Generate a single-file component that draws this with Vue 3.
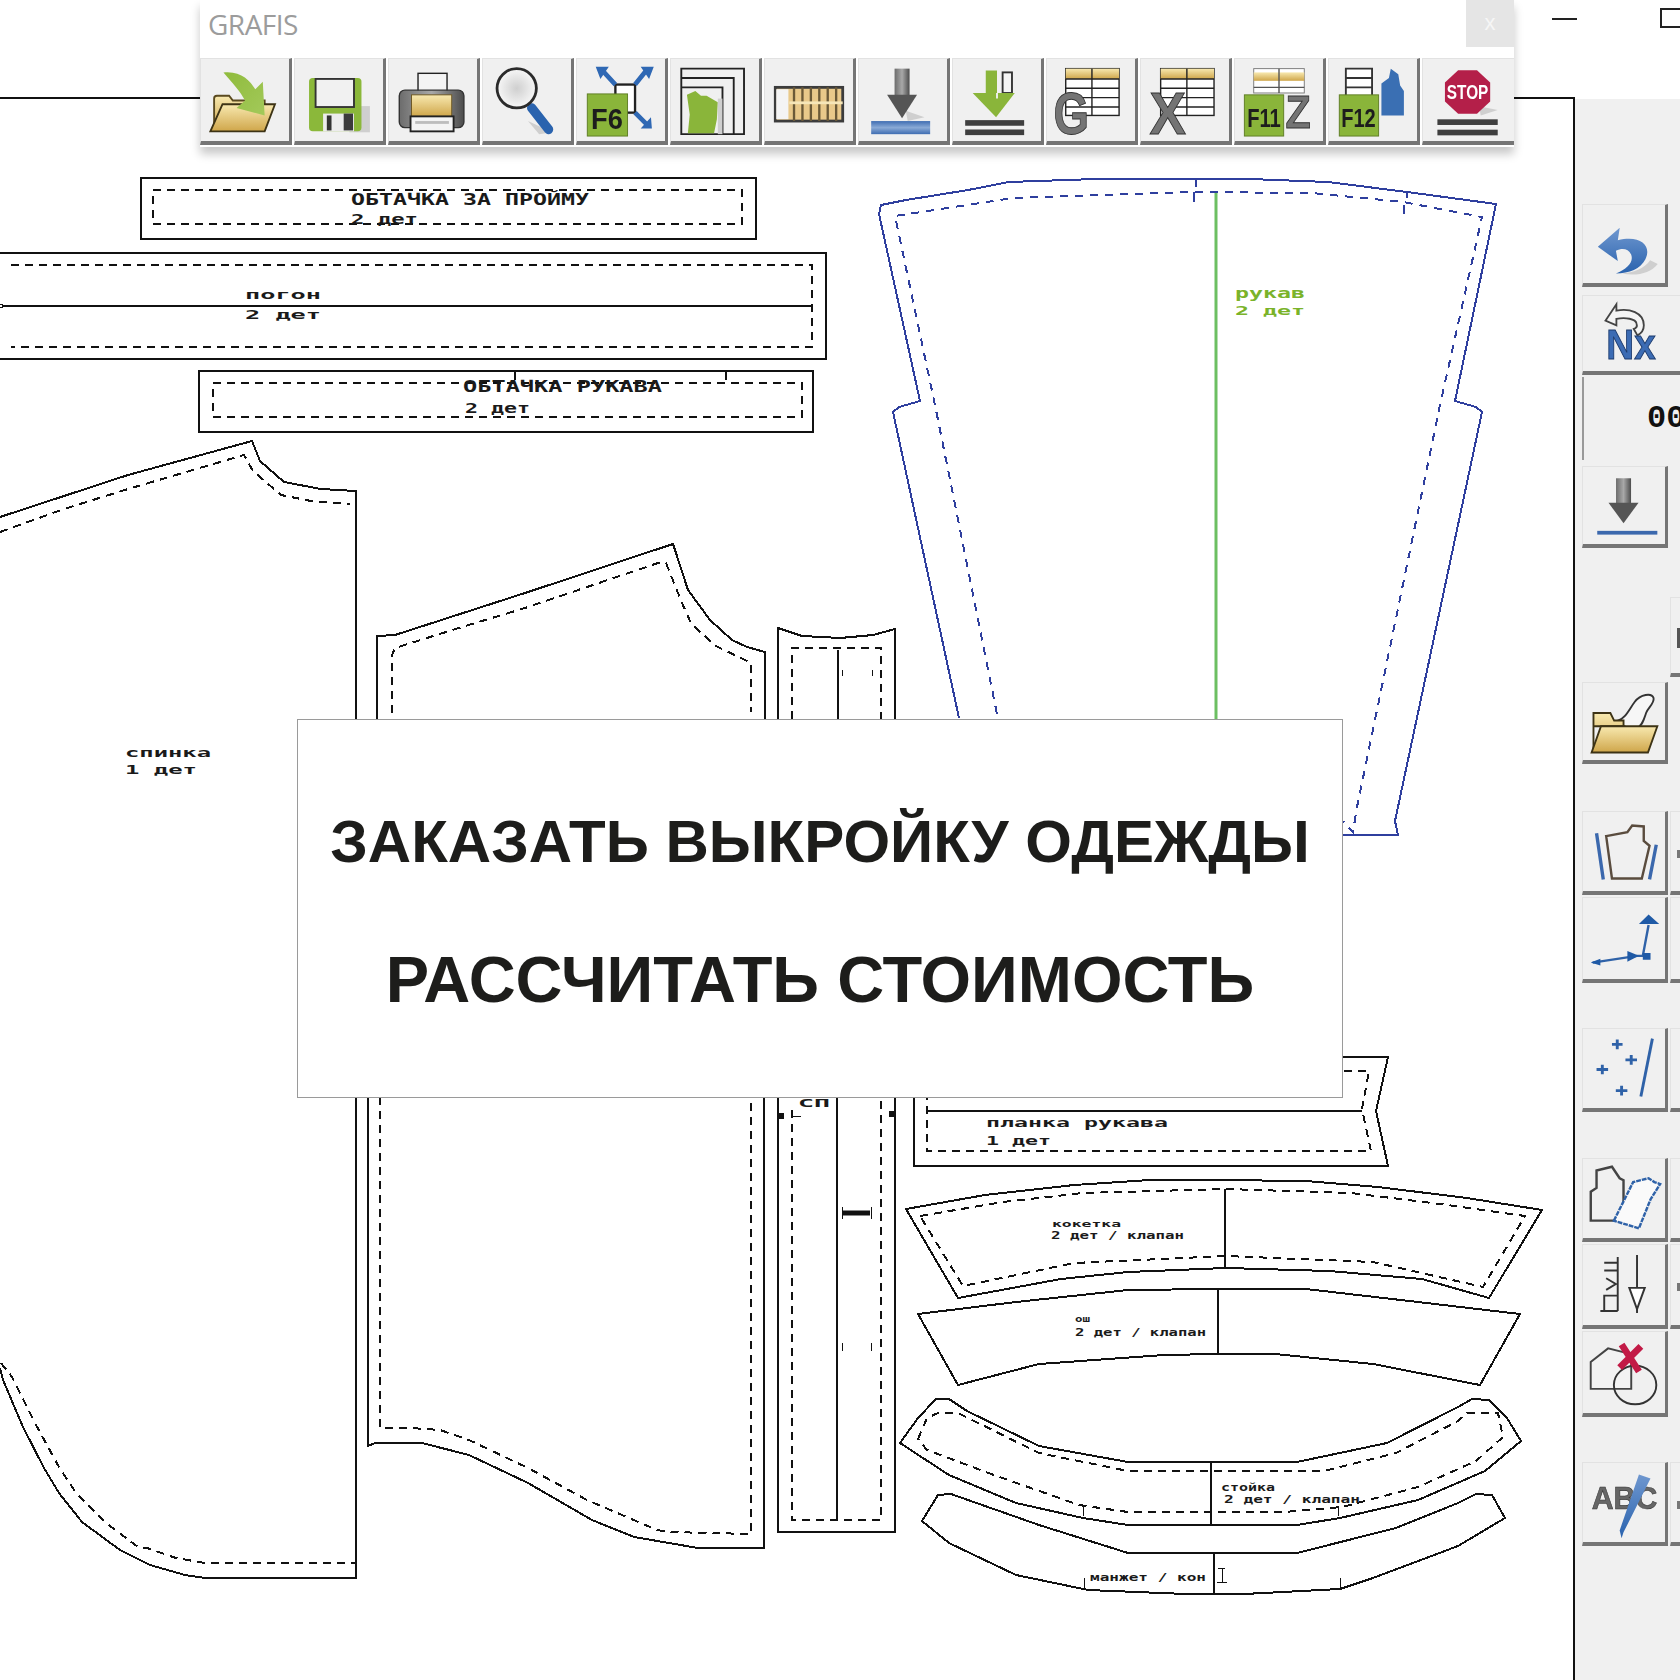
<template>
  <div class="screen">
    <svg class="defs" width="0" height="0">
      <defs>
        <linearGradient id="gFolder" x1="0" y1="0" x2="0" y2="1">
          <stop offset="0" stop-color="#f8e9b0" />
          <stop offset="1" stop-color="#cfa64a" />
        </linearGradient>
        <linearGradient id="gGreen" x1="0" y1="0" x2="1" y2="1">
          <stop offset="0" stop-color="#8fbb3c" />
          <stop offset="1" stop-color="#a3c95a" />
        </linearGradient>
        <linearGradient id="gSteel" x1="0" y1="0" x2="1" y2="0">
          <stop offset="0" stop-color="#6c6c6c" />
          <stop offset="0.5" stop-color="#a8a8a8" />
          <stop offset="1" stop-color="#4c4c4c" />
        </linearGradient>
        <linearGradient id="gBlue" x1="0" y1="0" x2="0" y2="1">
          <stop offset="0" stop-color="#6f97cf" />
          <stop offset="1" stop-color="#2a63ae" />
        </linearGradient>
        <linearGradient id="gBar" x1="0" y1="0" x2="0" y2="1">
          <stop offset="0" stop-color="#3f6db2" />
          <stop offset="0.5" stop-color="#8aaad6" />
          <stop offset="1" stop-color="#3f6db2" />
        </linearGradient>
        <radialGradient id="gLens">
          <stop offset="0" stop-color="#cfcfcf" />
          <stop offset="1" stop-color="#f7f7f7" />
        </radialGradient>
      </defs>
    </svg>

    <div class="caption">
      <span class="minimize"></span>
      <span class="restore"></span>
    </div>

    <div class="body">
      <div class="workspace">
        <svg class="sheet" viewBox="0 99 1573 1581" width="1573" height="1581">
          <!-- обтачки и погон -->
          <rect class="cut" x="141" y="178" width="615" height="61" />
          <rect class="seam" x="153" y="190" width="589" height="34" />
          <polyline class="cut" points="0,253 826,253 826,359 0,359" />
          <polyline class="seam" points="11,265 812,265 812,347 11,347" />
          <line class="cut" x1="2" y1="306" x2="812" y2="306" />
          <circle class="thin" cx="1" cy="306" r="2" />
          <rect class="cut" x="199" y="371" width="614" height="61" />
          <rect class="seam" x="213" y="383" width="589" height="34" />
          <path class="cut" d="M515 371v9M726 371v9" />

          <!-- спинка -->
          <polyline class="cut" points="0,517 128,475 252,441 260,461 284,482 321,489 356,491 356,1578 205,1578 185,1575 150,1565 120,1550 82,1522 59,1493 44,1468 23,1427 3,1380 0,1368" />
          <polyline class="seam" points="0,532 64,509 128,489 244,455 253,471 281,495 311,501 350,504" />
          <polyline class="seam" points="1,1363 12,1377 35,1423 59,1467 76,1493 106,1523 138,1547 147,1548 176,1558 205,1563 355,1563" />

          <!-- перед -->
          <polyline class="cut" points="377,719 377,636 395,635 525,593 673,544 675,550 688,590 710,620 732,640 747,647 765,652 765,719" />
          <polyline class="seam" points="392,713 392,655 395,648 462,627 525,608 658,563 666,563 682,603 691,623 714,645 751,663 751,712" />
          <polyline class="cut" points="368,1097 368,1446 375,1443 422,1443 469,1455 528,1483 592,1520 634,1537 698,1548 764,1548 764,1097" />
          <polyline class="seam" points="380,1097 380,1428 411,1428 440,1430 469,1440 528,1468 587,1500 657,1530 669,1532 751,1534 751,1097" />

          <!-- планка -->
          <polyline class="cut" points="778,719 778,628 802,636 840,638 873,635 895,629 895,719" />
          <polyline class="seam" points="792,719 792,648 881,648 881,719" />
          <line class="cut" x1="838" y1="650" x2="838" y2="719" />
          <path class="thin" d="M842 670v6M872 670v6M842 1207v12M871 1207v12M842 1343v8M871 1343v8" />
          <line class="heavy" x1="843" y1="1213" x2="870" y2="1213" />
          <polyline class="cut" points="778,1097 778,1532 895,1532 895,1097" />
          <polyline class="seam" points="792,1110 792,1520 881,1520 881,1097" />
          <line class="cut" x1="837" y1="1097" x2="837" y2="1520" />
          <path class="thin" d="M792 1116h9" />
          <rect class="mark" x="778" y="1113" width="6" height="6" />
          <rect class="mark" x="889" y="1111" width="6" height="6" />

          <!-- рукав -->
          <polyline class="sleeve" points="959,718 893,412 899,407 920,401 879,214 881,205 906,200 968,190 1009,182 1096,179 1194,179 1250,179 1328,182 1407,192 1496,204 1455,401 1476,407 1482,412 1395,821 1398,835 1343,835" />
          <polyline class="sleeve-seam" points="997,714 935,405 895,216 1013,198 1192,192 1312,193 1403,202 1482,217 1440,405 1357,807 1353,832 1343,821" />
          <path class="sleeve" d="M1196 179v8M1194 192v10M1407 192v6M1404 205v9" />
          <line class="grain" x1="1216" y1="193" x2="1216" y2="719" />

          <!-- планка рукава -->
          <polyline class="cut" points="1342,1057 1388,1057 1376,1111 1388,1166 914,1166 914,1097" />
          <polyline class="seam" points="1344,1071 1369,1071 1362,1109 1371,1151 927,1151 927,1097" />
          <line class="cut" x1="927" y1="1111" x2="1362" y2="1111" />

          <!-- кокетка -->
          <polygon class="cut" points="906,1209 985,1195 1074,1185 1150,1180 1217,1180 1306,1181 1378,1187 1467,1198 1542,1210 1489,1298 1422,1279 1329,1271 1226,1268 1128,1272 1061,1279 958,1298" />
          <polygon class="seam" points="920,1216 1003,1202 1083,1193 1226,1189 1351,1193 1440,1204 1525,1216 1483,1287 1373,1262 1226,1256 1074,1263 963,1286" />
          <line class="cut" x1="1225" y1="1189" x2="1225" y2="1268" />
          <polygon class="cut" points="918,1314 1016,1302 1128,1290 1217,1289 1306,1289 1418,1302 1520,1314 1480,1385 1373,1364 1275,1354 1217,1354 1164,1355 1039,1364 958,1385" />
          <line class="cut" x1="1218" y1="1289" x2="1218" y2="1354" />

          <!-- стойка -->
          <polygon class="cut" points="900,1443 918,1418 936,1399 949,1399 967,1411 1039,1446 1128,1462 1210,1462 1297,1462 1387,1443 1458,1407 1472,1399 1489,1400 1507,1418 1521,1441 1485,1471 1418,1500 1340,1518 1297,1525 1128,1525 1083,1518 1016,1503 949,1475" />
          <polygon class="seam" points="918,1439 927,1418 938,1413 958,1413 1039,1453 1128,1471 1324,1471 1396,1453 1458,1421 1467,1413 1498,1413 1503,1437 1476,1461 1418,1487 1342,1507 1284,1512 1128,1512 1079,1505 994,1475 927,1450" />
          <line class="cut" x1="1211" y1="1462" x2="1211" y2="1525" />
          <polygon class="cut" points="922,1521 938,1495 951,1494 1039,1525 1128,1553 1297,1553 1396,1528 1458,1503 1476,1494 1492,1495 1505,1518 1458,1546 1373,1578 1340,1589 1244,1594 1186,1594 1088,1590 1016,1575 949,1543" />
          <line class="cut" x1="1214" y1="1553" x2="1214" y2="1594" />
          <path class="thin" d="M1084 1578v12M1340 1578v11M1083 1506v10M1338 1506v10M1218 1568h7M1222 1568v14M1217 1582h10" />

          <text
            v-for="label in labels"
            :key="label.text + label.y"
            class="label"
            :class="label.tone"
            :x="label.x"
            :y="label.y"
            :font-size="label.size"
            :textLength="label.width"
            lengthAdjust="spacingAndGlyphs"
          >{{ label.text }}</text>
        </svg>
      </div>

      <aside class="panel">
        <div class="row r-undo">
          <button class="tool side">
            <svg viewBox="0 0 85 82"><path class="soft" d="M40 72c12-1 24-5 30-14l8 4c-8 10-22 13-38 10z" /><path fill="url(#gBlue)" d="M15 44 38 24l-2 13c24-6 36 6 29 20-5 10-17 15-31 15 12-5 19-12 16-20-3-6-9-7-16-4l2 11z" /></svg>
          </button>
        </div>
        <div class="row r-nx">
          <button class="tool side flat">
            <svg viewBox="0 0 85 82"><path fill="#f4f4f4" stroke="#444" stroke-width="2" d="M20 27 32 9v7c14-3 30 2 30 16 0 5-3 9-7 11l-4-7c3-1 4-3 3-6-1-5-12-7-22-5v7z" /><text class="nx" x="21" y="69" font-size="46" textLength="54" lengthAdjust="spacingAndGlyphs">Nx</text></svg>
          </button>
        </div>
        <div class="row r-count">
          <div class="count">00</div>
        </div>
        <div class="row r-step">
          <button class="tool side">
            <svg viewBox="0 0 85 82"><rect x="34" y="12" width="16" height="28" fill="url(#gSteel)" /><path fill="#555" d="M26 38h32L42 60z" /><rect x="14" y="68" width="64" height="4" fill="#3b68ad" /></svg>
          </button>
        </div>
        <div class="row r-small">
          <span class="ghost"></span>
          <button class="tool side"><span class="tick tall"></span></button>
        </div>
        <div class="row r-open">
          <button class="tool side">
            <svg viewBox="0 0 85 82"><path fill="#f6f6f6" stroke="#333" stroke-width="2" d="M36 40c8-2 12-12 18-20 6-8 18-10 20-4 1 6-6 10-8 16-2 6-4 14-10 16-6 1-18-2-20-8z" /><path fill="url(#gFolder)" stroke="#3d3315" stroke-width="2" d="M10 72V32h18l4 8h10v6H10z" /><path fill="url(#gFolder)" stroke="#3d3315" stroke-width="2" d="M8 74 18 46h60L68 74z" /></svg>
          </button>
        </div>
        <div class="row r-piece">
          <button class="tool side">
            <svg viewBox="0 0 85 82"><path fill="none" stroke="#3b68ad" stroke-width="3.500" d="M14 22l7 48M76 34l-7 36" /><path fill="none" stroke="#5a4c3e" stroke-width="2.500" d="M24 25l22-4 5-7 12 1 0 15 6 5-8 34H30z" /></svg>
          </button>
          <button class="tool side"><span class="tick"></span></button>
        </div>
        <div class="row r-line">
          <button class="tool side">
            <svg viewBox="0 0 85 82"><path fill="none" stroke="#2f62a8" stroke-width="2.500" d="M10 66l46-7h6l6-32" /><path fill="#1f5aa6" d="M8 66l10-4v7zM46 54l12 5-12 6zM62 56h8v7h-8zM58 26l10-10 11 10z" /></svg>
          </button>
          <button class="tool side"></button>
        </div>
        <div class="row r-points">
          <button class="tool side">
            <svg viewBox="0 0 85 82"><path fill="none" stroke="#2f62a8" stroke-width="3" d="M30 16h11M35.500 11v10M14 42h12M20 37v10M44 32h12M50 27v10M34 64h12M40 59v10" /><path fill="none" stroke="#2f62a8" stroke-width="3" d="M72 10 60 70" /></svg>
          </button>
          <button class="tool side"></button>
        </div>
        <div class="row r-fold">
          <button class="tool side">
            <svg viewBox="0 0 85 82"><path fill="none" stroke="#444" stroke-width="2.500" d="M8 64V34l6-4V12l16-4 8 12 4 2v42z" /><path fill="#fafafa" stroke="#2f62a8" stroke-width="2.500" stroke-dasharray="5 1" d="M32 64l20-40 16-4 6 4 6 2-10 16-12 30z" /></svg>
          </button>
          <button class="tool side"></button>
        </div>
        <div class="row r-notch">
          <button class="tool side">
            <svg viewBox="0 0 85 82"><path fill="none" stroke="#333" stroke-width="2" d="M22 18h14v8H22M36 12v56M24 34l10 6-10 6M36 52H22v16M18 68h18M56 10v60" /><path fill="#fff" stroke="#333" stroke-width="2" d="M48 44h16l-8 22z" /></svg>
          </button>
          <button class="tool side"><span class="tick"></span></button>
        </div>
        <div class="row r-del">
          <button class="tool side">
            <svg viewBox="0 0 85 82"><path fill="#f2f2f2" stroke="#444" stroke-width="2" d="M8 58V30l18-14 24 6v36z" /><ellipse cx="54" cy="54" rx="22" ry="20" fill="none" stroke="#333" stroke-width="2" /><path stroke="#c21a46" stroke-width="7" d="M40 12l18 28M60 14 38 36" /></svg>
          </button>
        </div>
        <div class="row r-text">
          <button class="tool side">
            <svg viewBox="0 0 85 82"><text class="abc" x="9" y="48" font-size="32" textLength="68" lengthAdjust="spacingAndGlyphs">ABC</text><path fill="url(#gBlue)" d="M58 12l12 4-28 56-2 6-2-8z" /></svg>
          </button>
          <button class="tool side"><span class="tick"></span></button>
        </div>
      </aside>
    </div>

    <div class="bar-window">
      <div class="bar-title">
        <span class="bar-name">GRAFIS</span>
        <span class="bar-close">x</span>
      </div>
      <div class="bar-tools">
        <button class="tool">
          <svg viewBox="0 0 94 87"><path fill="url(#gFolder)" stroke="#5a4a20" stroke-width="2" d="M14 74V42q0-3 3-3h13l4 5h34v8z" /><path fill="url(#gFolder)" stroke="#3d3315" stroke-width="2" d="M10 77 23 48h56L68 77z" /><path fill="url(#gGreen)" d="M24 14c18-2 28 8 34 18l8-8 2 36-30-8 9-8C42 34 34 26 24 14z" /></svg>
        </button>
        <button class="tool">
          <svg viewBox="0 0 94 87"><rect class="soft" x="58" y="50" width="22" height="28" /><rect x="15" y="20" width="56" height="57" rx="4" fill="#8bb83a" /><rect x="22" y="21" width="41" height="30" fill="#f1f1f1" stroke="#333" stroke-width="2" /><rect x="30" y="58" width="33" height="19" fill="#ececec" /><rect x="34" y="60" width="5" height="16" fill="#333" /><rect x="52" y="58" width="10" height="18" fill="#3b3b3b" /></svg>
        </button>
        <button class="tool">
          <svg viewBox="0 0 94 87"><rect x="31" y="15" width="31" height="24" fill="#f4f4f4" stroke="#222" stroke-width="1.500" /><rect x="11" y="33" width="69" height="40" rx="6" fill="url(#gSteel)" stroke="#333" stroke-width="1.500" /><rect x="24" y="38" width="43" height="23" fill="url(#gFolder)" stroke="#6b5520" /><rect x="23" y="61" width="46" height="16" fill="#f4f4f4" stroke="#222" stroke-width="2" /><rect x="28" y="66" width="36" height="3" fill="#bdbdbd" /></svg>
        </button>
        <button class="tool">
          <svg viewBox="0 0 94 87"><path class="soft" d="M48 66 74 78 60 80z" /><path stroke="#2a63ae" stroke-width="10" stroke-linecap="round" d="M52 52 70 75" /><circle cx="36" cy="31" r="21" fill="url(#gLens)" stroke="#2b2b2b" stroke-width="3" /></svg>
        </button>
        <button class="tool">
          <svg viewBox="0 0 94 87"><rect x="41" y="27" width="21" height="30" fill="#fff" stroke="#222" stroke-width="2.500" /><path stroke="#2f68b4" stroke-width="5" d="M41 27 28 13M62 27 74 12M62 57l12 12" /><path fill="#2f68b4" d="M20 8h14l-9 13zM82 8H68l9 13zM80 74H68l11-12z" /><rect x="11" y="37" width="43" height="45" fill="#8ab53a" stroke="#5e7d24" /><text class="fkey" x="15" y="74" font-size="32" textLength="34" lengthAdjust="spacingAndGlyphs">F6</text></svg>
        </button>
        <button class="tool">
          <svg viewBox="0 0 94 87"><path fill="none" stroke="#222" stroke-width="2" d="M78 80V10H11v70zM67 80V20H11M55 80V30H11" /><path fill="#8ab53a" d="M17 38l9-4 6 5 6 0 12 7-1 18-3 15-28 0 2-20z" /><rect x="50" y="42" width="5" height="38" fill="#cfcfcf" /></svg>
        </button>
        <button class="tool">
          <svg viewBox="0 0 94 87"><rect x="11" y="30" width="72" height="36" fill="#e9c98a" stroke="#3c3c3c" stroke-width="3" /><rect x="12" y="32" width="13" height="32" fill="#f4f4f4" /><path stroke="#6b5a38" stroke-width="2.500" d="M31 30v36M40 30v36M49 30v36M58 30v36M67 30v36M76 30v36" /><rect x="26" y="45" width="57" height="3" fill="#f6e6b8" /></svg>
        </button>
        <button class="tool">
          <svg viewBox="0 0 94 87"><path class="soft" d="M50 55 70 62 52 66z" /><rect x="38" y="10" width="16" height="30" fill="url(#gSteel)" /><path fill="#555" d="M30 38h32L46 63z" /><rect x="13" y="66" width="63" height="14" fill="url(#gBar)" /></svg>
        </button>
        <button class="tool">
          <svg viewBox="0 0 94 87"><rect x="35" y="12" width="12" height="28" fill="#8ab53a" /><rect x="53" y="14" width="10" height="22" fill="#f4f4f4" stroke="#333" stroke-width="2" /><path fill="#8ab53a" d="M21 36h45L46 62z" /><path stroke="#f0f0f0" stroke-width="2" d="M47 36v6" /><rect x="13" y="65" width="63" height="6" fill="#3f3f3f" /><rect x="13" y="75" width="63" height="6" fill="#3f3f3f" /></svg>
        </button>
        <button class="tool">
          <svg viewBox="0 0 94 87"><rect x="20" y="10" width="57" height="50" fill="#fff" stroke="#222" stroke-width="1.500" /><rect x="20" y="10" width="57" height="11" fill="url(#gFolder)" /><path stroke="#222" stroke-width="1.500" d="M20 21h57M20 31h57M20 41h57M20 51h57M48 10v50" /><text class="bigtext" x="7" y="80" font-size="64" textLength="38" lengthAdjust="spacingAndGlyphs">G</text></svg>
        </button>
        <button class="tool">
          <svg viewBox="0 0 94 87"><rect x="21" y="10" width="57" height="50" fill="#fff" stroke="#222" stroke-width="1.500" /><rect x="21" y="10" width="57" height="11" fill="url(#gFolder)" /><path stroke="#222" stroke-width="1.500" d="M21 21h57M21 31h57M21 41h57M21 51h57M49 10v50" /><text class="bigtext" x="9" y="80" font-size="64" textLength="39" lengthAdjust="spacingAndGlyphs">X</text></svg>
        </button>
        <button class="tool">
          <svg viewBox="0 0 94 87"><rect x="20" y="10" width="54" height="26" fill="#fff" stroke="#777" /><rect x="20" y="14" width="54" height="9" fill="url(#gFolder)" /><path stroke="#555" stroke-width="1.500" d="M20 30h54M47 10v26" /><rect x="10" y="38" width="42" height="44" fill="#8ab53a" stroke="#5e7d24" /><text class="fkey" x="13" y="72" font-size="28" textLength="36" lengthAdjust="spacingAndGlyphs">F11</text><text class="bigz" x="54" y="73" font-size="50" textLength="27" lengthAdjust="spacingAndGlyphs">Z</text></svg>
        </button>
        <button class="tool">
          <svg viewBox="0 0 94 87"><path fill="#fff" stroke="#333" stroke-width="2" d="M18 10h28v30H18zM18 20h28M18 30h28" /><path fill="#3a6fb3" d="M56 60V26l8-6 2-10 8 6 2 12 4 6v26z" /><rect x="11" y="38" width="42" height="44" fill="#8ab53a" stroke="#5e7d24" /><text class="fkey" x="13" y="72" font-size="28" textLength="37" lengthAdjust="spacingAndGlyphs">F12</text></svg>
        </button>
        <button class="tool stop-tool">
          <svg viewBox="0 0 94 87"><path class="soft" d="M58 50 78 54 60 60z" /><path fill="#b41f49" d="M36 12h20l14 13v20L56 58H36L22 45V25z" /><text class="stop" x="24" y="42" font-size="22" textLength="44" lengthAdjust="spacingAndGlyphs">STOP</text><rect x="14" y="64" width="64" height="6" fill="#3f3f3f" /><rect x="14" y="75" width="64" height="6" fill="#3f3f3f" /></svg>
        </button>
      </div>
    </div>

    <div class="order">
      <p class="order-main">ЗАКАЗАТЬ ВЫКРОЙКУ ОДЕЖДЫ</p>
      <p class="order-price">РАССЧИТАТЬ СТОИМОСТЬ</p>
    </div>
  </div>
</template>

<script setup>
const labels = [
  { text: 'ОБТАЧКА ЗА ПРОЙМУ', x: 351, y: 205, size: 15, width: 238 },
  { text: '2 дет', x: 351, y: 224, size: 14, width: 67 },
  { text: 'погон', x: 245, y: 299, size: 13, width: 76 },
  { text: '2 дет', x: 245, y: 319, size: 13, width: 76 },
  { text: 'ОБТАЧКА РУКАВА', x: 463, y: 392, size: 15, width: 199 },
  { text: '2 дет', x: 465, y: 413, size: 14, width: 65 },
  { text: 'спинка', x: 125, y: 757, size: 13, width: 86 },
  { text: '1 дет', x: 125, y: 774, size: 13, width: 72 },
  { text: 'рукав', x: 1235, y: 298, size: 14, width: 70, tone: 'green' },
  { text: '2 дет', x: 1235, y: 315, size: 13, width: 70, tone: 'green' },
  { text: 'планка рукава', x: 986, y: 1127, size: 13, width: 182 },
  { text: '1 дет', x: 986, y: 1145, size: 13, width: 65 },
  { text: 'кокетка', x: 1052, y: 1227, size: 9, width: 69 },
  { text: '2 дет / клапан', x: 1051, y: 1239, size: 10, width: 133 },
  { text: 'ош', x: 1075, y: 1322, size: 9, width: 15 },
  { text: '2 дет / клапан', x: 1075, y: 1336, size: 10, width: 131 },
  { text: 'стойка', x: 1221, y: 1491, size: 10, width: 54 },
  { text: '2 дет / клапан', x: 1224, y: 1503, size: 10, width: 136 },
  { text: 'манжет / кон', x: 1090, y: 1581, size: 10, width: 116 },
  { text: 'СП', x: 798, y: 1107, size: 11, width: 32 }
]
</script>

<style scoped>
.screen {
  position: relative;
  width: 1680px;
  height: 1680px;
  overflow: hidden;
  background: #fff;
  font-family: "Liberation Sans", Arial, sans-serif;
}

.defs {
  position: absolute;
}

.caption {
  display: flex;
  justify-content: flex-end;
  align-items: flex-start;
  height: 97px;
}

.minimize {
  width: 25px;
  height: 2px;
  margin: 18px 83px 0 0;
  background: #222;
}

.restore {
  width: 20px;
  height: 20px;
  margin: 8px 0 0;
  box-sizing: border-box;
  border: 2px solid #222;
  border-right: 0;
}

.body {
  display: flex;
  height: 1583px;
}

.workspace {
  width: 1575px;
  box-sizing: border-box;
  border-top: 2px solid #111;
  border-right: 2px solid #111;
  flex-shrink: 0;
}

.sheet {
  display: block;
}

.cut,
.seam,
.sleeve,
.sleeve-seam,
.thin {
  fill: none;
  stroke: #111;
  stroke-width: 2;
  shape-rendering: crispEdges;
}

.seam {
  stroke-dasharray: 8 6;
}

.sleeve,
.sleeve-seam {
  stroke: #2f3f9e;
}

.sleeve-seam {
  stroke-dasharray: 8 7;
}

.thin {
  stroke-width: 1;
}

.heavy {
  stroke: #111;
  stroke-width: 5;
}

.mark {
  fill: #111;
}

.grain {
  stroke: #6cbf62;
  stroke-width: 3;
}

.label {
  font-family: "DejaVu Sans Mono", monospace;
  font-weight: 700;
  fill: #1a1a1a;
}

.label.green {
  fill: #7ab32a;
}

.panel {
  flex: 1;
  min-width: 0;
  overflow: hidden;
  margin-top: 2px;
  padding: 105px 0 0 7px;
  background: #f0f0f0;
}

.row {
  display: flex;
  gap: 2px;
  width: 190px;
}

.r-undo { height: 83px; }
.r-nx { height: 80px; margin-top: 8px; }
.r-count { height: 83px; margin-top: 2px; }
.r-step { height: 82px; margin-top: 6px; }
.r-small { height: 80px; margin-top: 49px; }
.r-open { height: 82px; margin-top: 5px; }
.r-piece { height: 84px; margin-top: 47px; }
.r-line { height: 86px; margin-top: 2px; }
.r-points { height: 84px; margin-top: 45px; }
.r-fold { height: 84px; margin-top: 46px; }
.r-notch { height: 85px; margin-top: 2px; }
.r-del { height: 86px; margin-top: 2px; }
.r-text { height: 84px; margin-top: 45px; }

.ghost {
  width: 86px;
  flex-shrink: 0;
}

.tool {
  display: block;
  position: relative;
  flex: 0 0 auto;
  width: 92px;
  height: 87px;
  padding: 0;
  box-sizing: border-box;
  border: 0;
  border-top: 1px solid #e2e2e2;
  border-left: 1px solid #e2e2e2;
  border-right: 3px solid #757575;
  border-bottom: 4px solid #757575;
  background: #f0f0f0;
}

.tool.side {
  width: 86px;
  height: 100%;
}

.tool.flat {
  width: 190px;
  border-right: 0;
}

.tool.flat svg {
  width: 86px;
}

.tool svg {
  display: block;
  width: 100%;
  height: 100%;
  overflow: visible;
  filter: blur(0.35px);
}

.tick {
  position: absolute;
  top: 38px;
  left: 6px;
  width: 3px;
  height: 8px;
  background: #777;
}

.tick.tall {
  height: 20px;
  top: 30px;
  background: #555;
}

.soft {
  fill: #cfcfcf;
}

.count {
  width: 190px;
  padding-left: 63px;
  box-sizing: border-box;
  line-height: 83px;
  border-left: 2px solid #999;
  font-family: "Liberation Mono", monospace;
  font-size: 32px;
  font-weight: 700;
  color: #111;
}

.fkey {
  font-weight: 700;
  fill: #1d1d1d;
}

.nx {
  font-weight: 700;
  fill: #3c6cb4;
  stroke: #1c3a6c;
  stroke-width: 1;
}

.abc {
  font-weight: 700;
  fill: #666;
  stroke: #333;
  stroke-width: 0.6;
}

.bigtext,
.bigz {
  font-weight: 700;
  fill: #747474;
  stroke: #333;
  stroke-width: 1;
}

.stop {
  font-weight: 700;
  fill: #fff;
}

.bar-window {
  position: absolute;
  left: 200px;
  top: 0;
  width: 1314px;
  height: 147px;
  background: #fff;
  box-shadow: 0 7px 9px rgba(0, 0, 0, 0.22);
}

.bar-title {
  display: flex;
  justify-content: space-between;
  align-items: flex-start;
  height: 58px;
  padding-left: 8px;
}

.bar-name {
  margin-top: 6px;
  font-family: "Open Sans", sans-serif;
  font-size: 28px;
  line-height: 36px;
  letter-spacing: -0.5px;
  color: #9c9c9c;
}

.bar-close {
  width: 48px;
  height: 47px;
  line-height: 46px;
  text-align: center;
  background: #e5e5e5;
  color: #f6f6f6;
  font-size: 22px;
}

.bar-tools {
  display: flex;
  gap: 2px;
}

.stop-tool {
  border-right: 0;
}

.order {
  position: absolute;
  left: 297px;
  top: 719px;
  display: flex;
  flex-direction: column;
  justify-content: center;
  align-items: center;
  gap: 68px;
  width: 1046px;
  height: 379px;
  padding-top: 4px;
  box-sizing: border-box;
  border: 1px solid #9a9a9a;
  background: #fff;
}

.order p {
  margin: 0;
  line-height: 70px;
  font-weight: 700;
  color: #1d1d1b;
  white-space: nowrap;
}

.order-main {
  font-size: 60px;
}

.order-price {
  font-size: 65px;
}
</style>
